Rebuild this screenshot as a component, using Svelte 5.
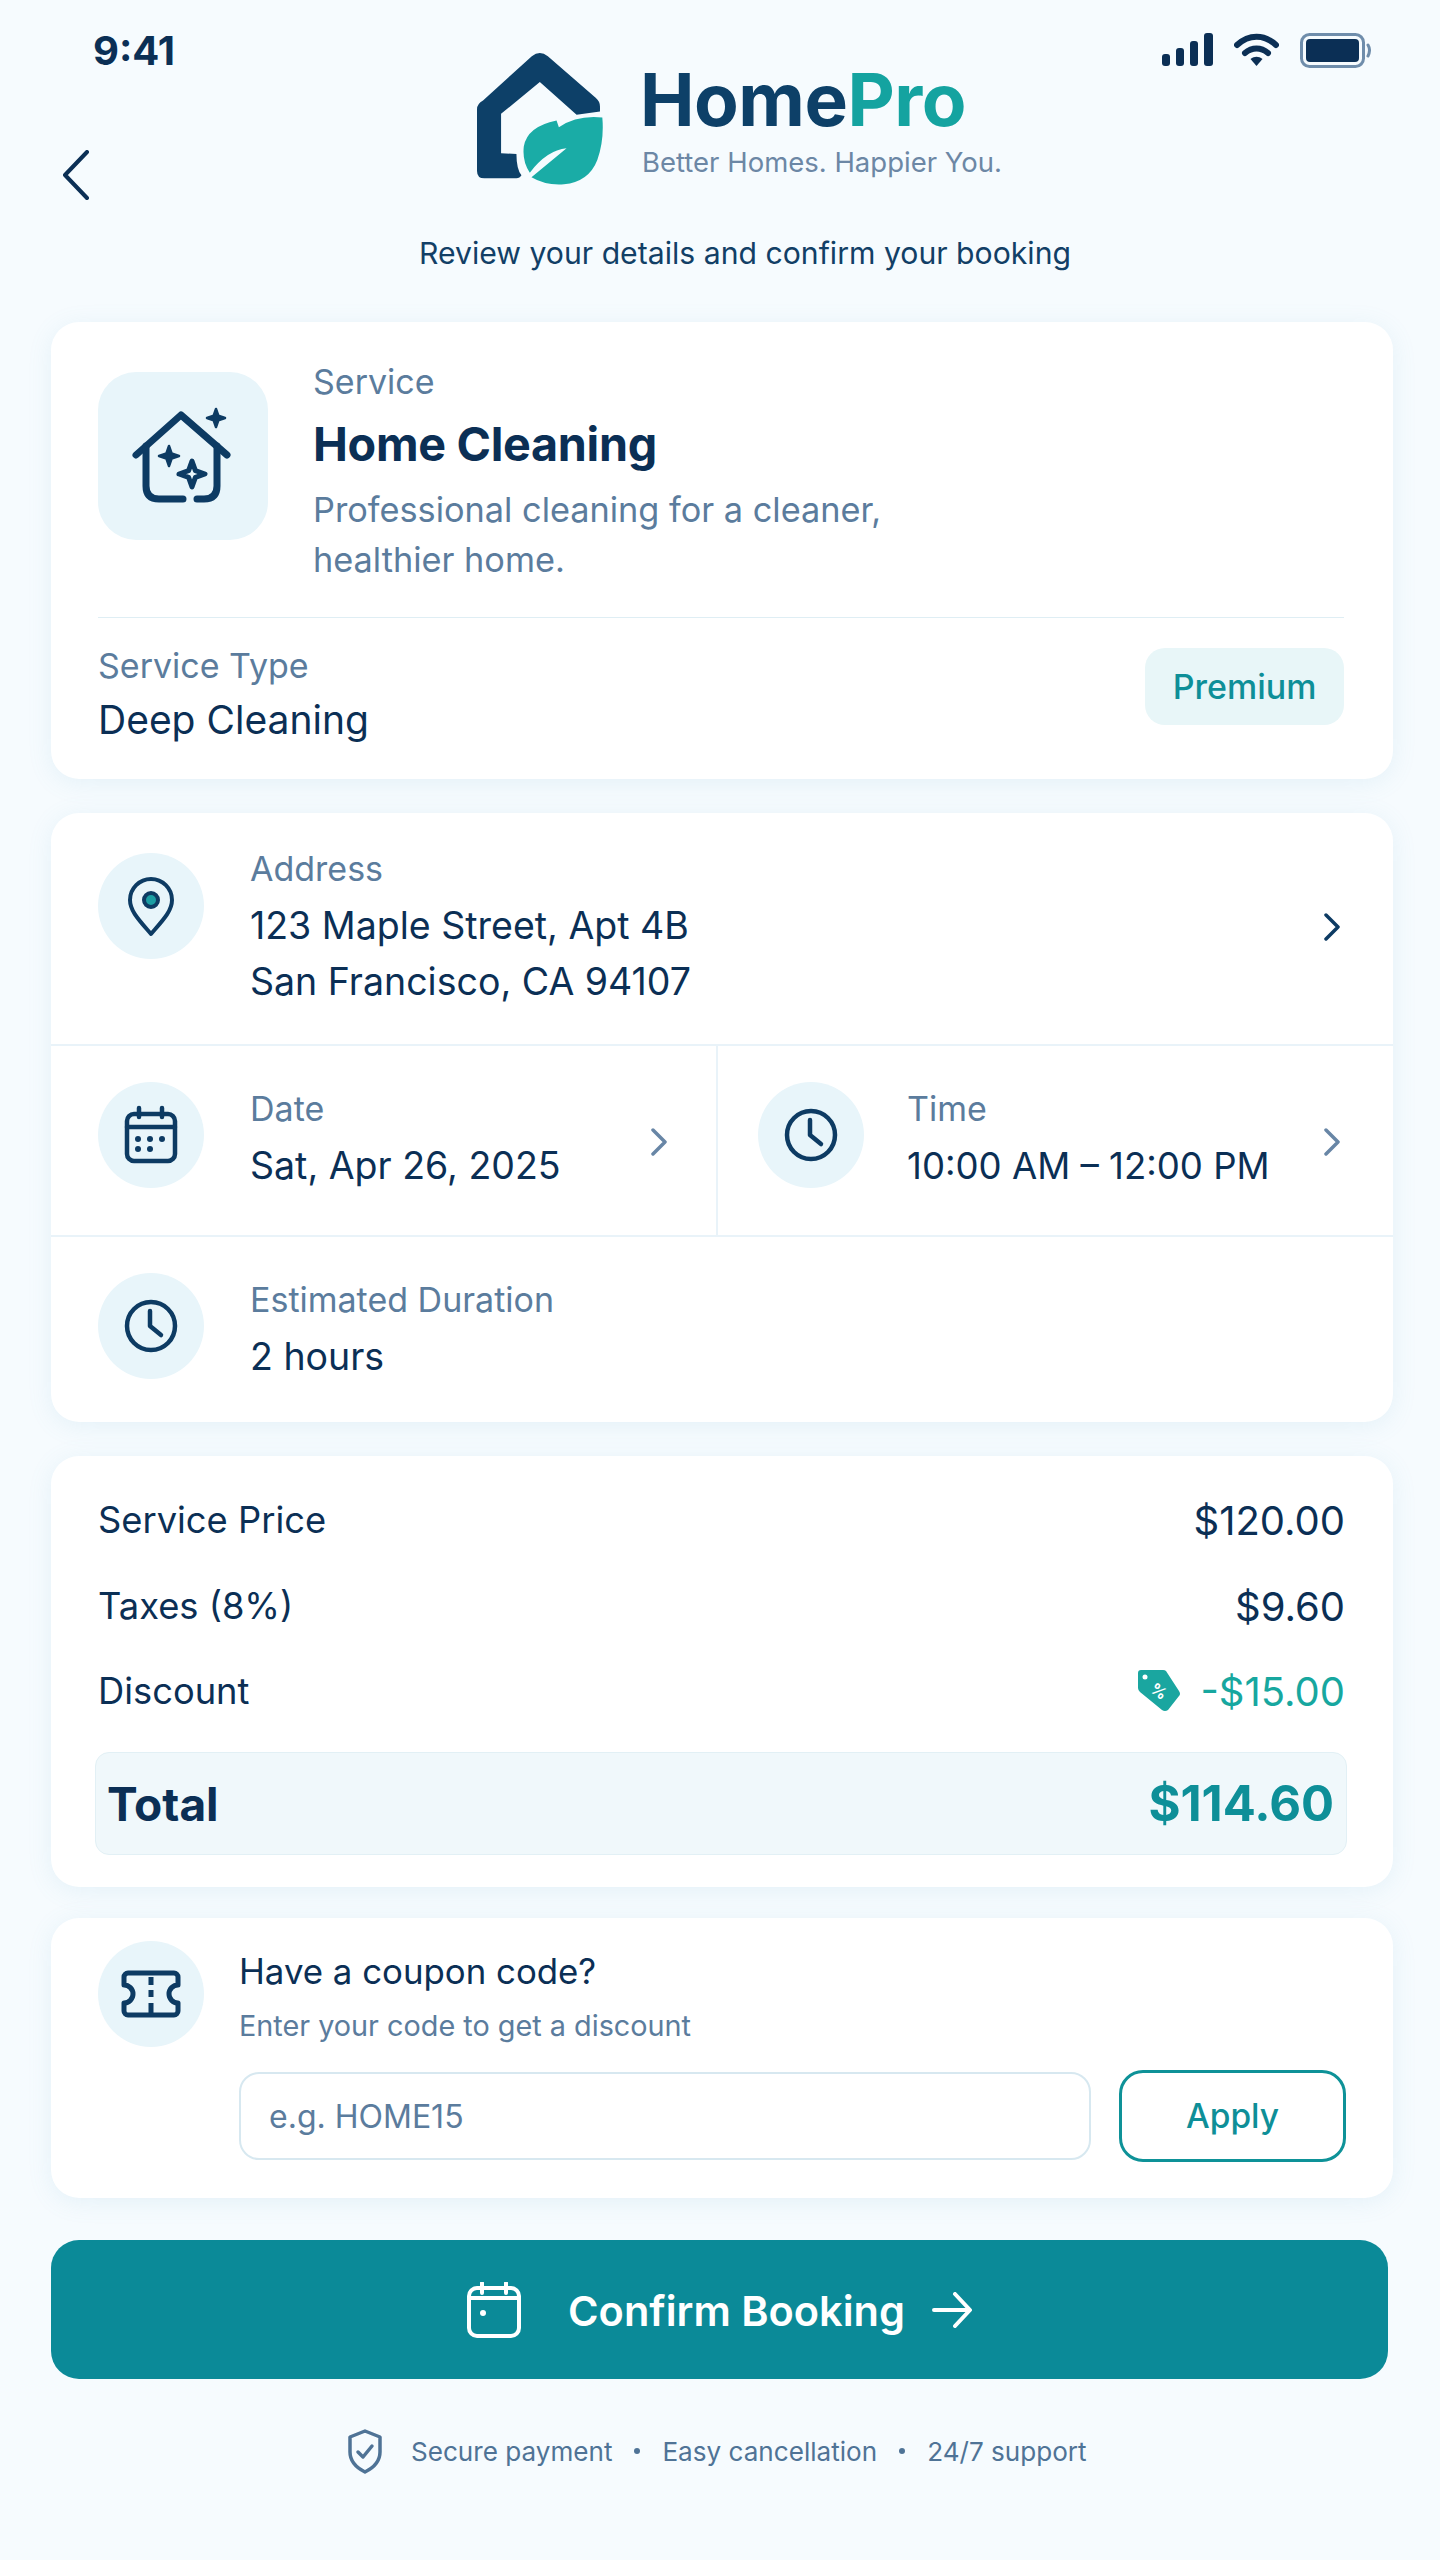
<script>
  const prices = [
    { label: 'Service Price', value: '$120.00' },
    { label: 'Taxes (8%)', value: '$9.60' }
  ];

  // four point star used by the cleaning icon
  function sparkle(cx, cy, r) {
    const k = r * 0.26;
    return `M${cx} ${cy - r}L${cx + k} ${cy - k}L${cx + r} ${cy}L${cx + k} ${cy + k}L${cx} ${cy + r}L${cx - k} ${cy + k}L${cx - r} ${cy}L${cx - k} ${cy - k}Z`;
  }
</script>

<main class="page">
  <header class="top">
    <div class="top-left">
      <div class="time">9:41</div>
      <button class="back" aria-label="Back">
        <svg width="28" height="50" viewBox="0 0 28 50" fill="none" stroke="#0b2f55" stroke-width="4" stroke-linecap="round" stroke-linejoin="round"><path d="M25 2 3 25l22 23"/></svg>
      </button>
    </div>

    <div class="logo">
      <svg width="127" height="132" viewBox="50 40 380 395">
        <path fill="#0d4068" d="M68 182 214 50q24-20 48 0l143 124q13 11 13 26v15l-70 10-110-98-116 95v118l46 2q0 45 15 64-5 9-15 9H72q-22 0-22-22V208q0-16 18-26Z"/>
        <path fill="#1aaca6" d="M425 233q6 68-15 127-25 65-100 73-55 4-97-21l105-87q-58 5-110 73-23-33-18-78 10-60 98-78l7 20q55-37 130-29Z"/>
      </svg>
      <div class="logo-text">
        <div class="brand">Home<span>Pro</span></div>
        <div class="tagline">Better Homes. Happier You.</div>
      </div>
    </div>

    <div class="status">
      <svg width="51" height="33" viewBox="0 0 51 33" fill="#0b2f55">
        <rect x="0" y="21" width="8" height="12" rx="3"/>
        <rect x="14" y="15" width="8" height="18" rx="3"/>
        <rect x="28" y="8" width="8" height="25" rx="3"/>
        <rect x="42" y="0" width="9" height="33" rx="3"/>
      </svg>
      <svg width="45" height="34" viewBox="0 0 45 34" fill="none" stroke="#0b2f55" stroke-width="6" stroke-linecap="round">
        <path d="M3 12C15 1 30 1 42 12"/>
        <path d="M11 20c7-6 16-6 23 0"/>
        <path d="M22.5 33l-6-7c4-3 8-3 12 0Z" fill="#0b2f55" stroke="none"/>
      </svg>
      <svg width="71" height="35" viewBox="0 0 71 35" fill="none">
        <rect x="1.5" y="1.5" width="62" height="32" rx="8" stroke="#6f8dab" stroke-width="3"/>
        <rect x="6" y="6" width="53" height="23" rx="4" fill="#0b2f55"/>
        <path d="M68 12q3 5 0 11" stroke="#6f8dab" stroke-width="3" stroke-linecap="round"/>
      </svg>
    </div>
  </header>

  <p class="subtitle">Review your details and confirm your booking</p>

  <section class="card service-card">
    <div class="service-top">
      <div class="tile">
        <svg width="110" height="105" viewBox="130 405 110 105" fill="none" stroke="#0d3b63" stroke-width="7" stroke-linecap="round" stroke-linejoin="round">
          <path d="M138 456l45-40 46 40"/>
          <path d="M148 447v40q0 13 13 13h24"/>
          <path d="M219 447v40q0 13-13 13h-7"/>
          <path d={sparkle(218, 419, 9)} fill="#0d3b63" stroke-width="2.5"/>
          <path d={sparkle(171, 457, 10)} fill="#0d3b63" stroke-width="2.5"/>
          <path d={sparkle(194, 475, 13)} fill="#eaf6fa" stroke-width="5"/>
        </svg>
      </div>
      <div class="service-text">
        <div class="label">Service</div>
        <h1>Home Cleaning</h1>
        <p>Professional cleaning for a cleaner,<br />healthier home.</p>
      </div>
    </div>
    <div class="service-type">
      <div>
        <div class="label">Service Type</div>
        <div class="value">Deep Cleaning</div>
      </div>
      <span class="pill">Premium</span>
    </div>
  </section>

  <section class="card details">
    <div class="row address">
      <div class="circle">
        <svg width="64" height="64" viewBox="0 0 64 64" fill="none" stroke="#0d3b63" stroke-width="4">
          <path d="M32 60C20 46 11 37 11 26a21 21 0 0 1 42 0C53 37 44 46 32 60Z" stroke-linejoin="round"/>
          <circle cx="32" cy="26" r="7" fill="#1b9ea3"/>
        </svg>
      </div>
      <div class="row-text">
        <div class="label">Address</div>
        <div class="value">123 Maple Street, Apt 4B<br />San Francisco, CA 94107</div>
      </div>
      <svg class="chev dark" width="18" height="28" viewBox="0 0 18 28" fill="none" stroke-width="3.5" stroke-linecap="round" stroke-linejoin="round"><path d="M3 2l12 12L3 26"/></svg>
    </div>

    <div class="split">
      <div class="row date">
        <div class="circle">
          <svg width="64" height="64" viewBox="0 0 64 64" fill="none" stroke="#0d3b63" stroke-width="4.5" stroke-linecap="round">
            <rect x="8" y="11" width="48" height="47" rx="7"/>
            <path d="M20 5v9M43 5v9M8 24h48"/>
            <g fill="#0d3b63" stroke="none">
              <circle cx="19" cy="36" r="3"/><circle cx="31" cy="36" r="3"/><circle cx="43" cy="36" r="3"/>
              <circle cx="19" cy="46" r="3"/><circle cx="31" cy="46" r="3"/>
            </g>
          </svg>
        </div>
        <div class="row-text">
          <div class="label">Date</div>
          <div class="value">Sat, Apr 26, 2025</div>
        </div>
        <svg class="chev" width="18" height="28" viewBox="0 0 18 28" fill="none" stroke-width="3.5" stroke-linecap="round" stroke-linejoin="round"><path d="M3 2l12 12L3 26"/></svg>
      </div>
      <div class="row time-cell">
        <div class="circle">
          <svg width="64" height="64" viewBox="0 0 64 64" fill="none" stroke="#0d3b63" stroke-width="4.5" stroke-linecap="round" stroke-linejoin="round">
            <circle cx="32" cy="32" r="24"/>
            <path d="M31 17v15l11 9"/>
          </svg>
        </div>
        <div class="row-text">
          <div class="label">Time</div>
          <div class="value">10:00 AM – 12:00 PM</div>
        </div>
        <svg class="chev" width="18" height="28" viewBox="0 0 18 28" fill="none" stroke-width="3.5" stroke-linecap="round" stroke-linejoin="round"><path d="M3 2l12 12L3 26"/></svg>
      </div>
    </div>

    <div class="row duration">
      <div class="circle">
        <svg width="64" height="64" viewBox="0 0 64 64" fill="none" stroke="#0d3b63" stroke-width="4.5" stroke-linecap="round" stroke-linejoin="round">
          <circle cx="32" cy="32" r="24"/>
          <path d="M31 17v15l11 9"/>
        </svg>
      </div>
      <div class="row-text">
        <div class="label">Estimated Duration</div>
        <div class="value">2 hours</div>
      </div>
    </div>
  </section>

  <section class="card pricing">
    {#each prices as p}
      <div class="price-row">
        <span>{p.label}</span>
        <span class="amount">{p.value}</span>
      </div>
    {/each}
    <div class="price-row last">
      <span>Discount</span>
      <span class="amount discount">
        <svg width="42" height="42" viewBox="0 0 42 42">
          <path fill="#1aa6a0" d="M3 0h22q2 0 3 1l13 20q2 3 0 5L30 40q-3 2-6 0L2 22q-2-2-2-4V3q0-3 3-3Z"/>
          <circle cx="7" cy="7" r="2.5" fill="#fff"/>
          <text x="21" y="27" text-anchor="middle" fill="#fff" font-size="16" font-weight="700" transform="rotate(35 21 21)">%</text>
        </svg>
        -$15.00
      </span>
    </div>
    <div class="total">
      <span>Total</span>
      <span class="total-value">$114.60</span>
    </div>
  </section>

  <section class="card coupon">
    <div class="coupon-head">
      <div class="circle">
        <svg width="64" height="64" viewBox="0 0 64 64" fill="none" stroke="#0d3b63" stroke-width="5" stroke-linejoin="round">
          <path d="M9 11h46a4 4 0 0 1 4 4v8a9 9 0 0 0 0 18v8a4 4 0 0 1-4 4H9a4 4 0 0 1-4-4v-8a9 9 0 0 0 0-18v-8a4 4 0 0 1 4-4Z"/>
          <path d="M32 15v8M32 28v7M32 41v10"/>
        </svg>
      </div>
      <div>
        <div class="coupon-title">Have a coupon code?</div>
        <div class="coupon-sub">Enter your code to get a discount</div>
      </div>
    </div>
    <div class="coupon-form">
      <input type="text" placeholder="e.g. HOME15" aria-label="Coupon code" />
      <button class="apply">Apply</button>
    </div>
  </section>

  <button class="confirm">
    <svg width="54" height="56" viewBox="0 0 54 56" fill="none" stroke="#fff" stroke-width="4" stroke-linecap="round" stroke-linejoin="round">
      <rect x="2" y="6" width="50" height="48" rx="8"/>
      <path d="M15 1v10M39 1v10M2 16h50"/>
      <circle cx="16" cy="31" r="3" fill="#fff" stroke="none"/>
    </svg>
    <span>Confirm Booking</span>
    <svg class="arrow" width="40" height="36" viewBox="0 0 40 36" fill="none" stroke="#fff" stroke-width="4" stroke-linecap="round" stroke-linejoin="round"><path d="M2 18h35M23 2l15 16-15 16"/></svg>
  </button>

  <footer class="foot">
    <svg width="36" height="45" viewBox="0 0 36 45" fill="none" stroke="#4f7396" stroke-width="3.5" stroke-linecap="round" stroke-linejoin="round">
      <path d="M18 2 33 8v15c0 10-7 16-15 20C10 39 3 33 3 23V8Z"/>
      <path d="M11 23l5 5 9-11"/>
    </svg>
    <span class="f1">Secure payment</span>
    <i></i>
    <span>Easy cancellation</span>
    <i></i>
    <span>24/7 support</span>
  </footer>
</main>

<style>
  :global(body) {
    margin: 0;
    background: #f6fbfe;
  }

  .page {
    width: 1342px;
    height: 2560px;
    padding-left: 51px;
    font-family: Inter, 'Liberation Sans', sans-serif;
    color: #0b2f55;
  }

  button {
    font-family: inherit;
    background: none;
    border: none;
    padding: 0;
    cursor: pointer;
  }

  .top {
    display: grid;
    grid-template-columns: 426px auto 1fr;
    height: 231px;
  }

  .top-left {
    padding-top: 31px;
  }

  .time {
    padding-left: 42px;
    font-size: 40px;
    font-weight: 700;
    line-height: 40px;
  }

  .back {
    display: block;
    margin: 79px 0 0 11px;
  }

  .logo {
    display: flex;
    gap: 38px;
    padding-top: 53px;
  }

  .logo-text {
    padding-top: 7px;
  }

  .brand {
    font-size: 73px;
    font-weight: 700;
    line-height: 80px;
    color: #0d4068;
    letter-spacing: -0.5px;
    margin-left: -2px;
  }

  .brand span {
    color: #14a3a0;
  }

  .tagline {
    margin-top: 2px;
    font-size: 27.5px;
    line-height: 40px;
    color: #6c87a5;
  }

  .status {
    display: flex;
    justify-content: flex-end;
    gap: 21px;
    padding: 33px 22px 0 0;
    align-items: flex-start;
  }

  .subtitle {
    margin: 0 0 47px 46px;
    font-size: 30.2px;
    line-height: 44px;
    text-align: center;
    color: #123f66;
  }

  .card {
    background: #fff;
    border-radius: 28px;
    box-shadow: 0 4px 24px rgba(110, 170, 205, 0.12);
    margin-bottom: 34px;
  }

  .label {
    font-size: 34px;
    line-height: 44px;
    color: #5b7c9d;
  }

  .value {
    font-size: 37.5px;
    line-height: 56px;
    color: #0b2f55;
  }

  /* service card */
  .service-card {
    height: 457px;
    box-sizing: border-box;
    padding: 38px 49px 0 47px;
  }

  .service-top {
    display: flex;
    gap: 45px;
    padding-bottom: 32px;
    border-bottom: 1px solid #dfeef4;
  }

  .tile {
    width: 170px;
    height: 168px;
    margin-top: 12px;
    border-radius: 38px;
    background: #e8f5fa;
    display: flex;
    align-items: center;
    justify-content: center;
  }

  .service-text h1 {
    margin: 10px 0 0;
    font-size: 46.7px;
    font-weight: 700;
    line-height: 60px;
    letter-spacing: -0.3px;
    color: #0b2f55;
  }

  .service-text p {
    margin: 11px 0 0;
    font-size: 34.3px;
    line-height: 50px;
    color: #5b7c9d;
  }

  .service-type {
    display: flex;
    justify-content: space-between;
    align-items: flex-start;
    padding-top: 26px;
  }

  .service-type .value {
    font-size: 39px;
    line-height: 50px;
    margin-top: 7px;
  }

  .pill {
    margin-top: 4px;
    width: 199px;
    height: 77px;
    border-radius: 20px;
    background: #e8f6f8;
    color: #0e8f98;
    font-size: 34px;
    font-weight: 500;
    display: flex;
    align-items: center;
    justify-content: center;
  }

  /* details card */
  .details {
    height: 609px;
    overflow: hidden;
  }

  .row {
    display: flex;
    align-items: flex-start;
    gap: 46px;
    padding: 41px 0 42px 47px;
  }

  .circle {
    flex: none;
    width: 106px;
    height: 106px;
    margin-top: -5px;
    border-radius: 50%;
    background: #e8f5fa;
    display: flex;
    align-items: center;
    justify-content: center;
  }

  .row-text {
    flex: 1;
    min-width: 0;
    white-space: nowrap;
  }

  .label + .value {
    margin-top: 7px;
  }

  .chev {
    flex: none;
    stroke: #6886a6;
    margin-top: 41px;
  }

  .chev.dark {
    stroke: #0d3b63;
  }

  .address {
    height: 233px;
    box-sizing: border-box;
    padding: 34px 52px 0 47px;
    border-bottom: 2px solid #e9f3f9;
  }

  .address .circle {
    margin-top: 6px;
  }

  .address .chev {
    margin-top: 66px;
  }

  .split {
    display: grid;
    grid-template-columns: 667px 1fr;
    border-bottom: 2px solid #e9f3f9;
  }

  .split .row {
    padding-bottom: 41px;
  }

  .date {
    padding-right: 48px;
    border-right: 2px solid #e9f3f9;
  }

  .time-cell {
    padding-left: 40px;
    padding-right: 52px;
    gap: 43px;
  }

  .time-cell .value {
    font-size: 36.6px;
  }

  /* pricing card */
  .pricing {
    height: 431px;
    box-sizing: border-box;
    padding: 39px 48px 0 47px;
    margin-bottom: 31px;
  }

  .price-row {
    display: flex;
    justify-content: space-between;
    align-items: center;
    height: 50px;
    margin-bottom: 36px;
    font-size: 36.3px;
  }

  .price-row.last {
    margin-top: -1px;
    margin-bottom: 37px;
  }

  .amount {
    font-size: 40px;
  }

  .discount {
    display: flex;
    align-items: center;
    gap: 20px;
    color: #17a79f;
  }

  .total {
    display: flex;
    justify-content: space-between;
    align-items: center;
    margin: -1px -2px 0 -3px;
    height: 103px;
    box-sizing: border-box;
    padding: 0 12px 0 11px;
    background: #f0f8fb;
    border: 1px solid #e2f0f5;
    border-radius: 14px;
    font-size: 46px;
    font-weight: 700;
  }

  .total-value {
    font-size: 49px;
    color: #0e8f98;
  }

  /* coupon card */
  .coupon {
    height: 280px;
    box-sizing: border-box;
    padding: 23px 47px 0;
    margin-bottom: 42px;
  }

  .coupon-head {
    display: flex;
    gap: 35px;
    height: 106px;
  }

  .coupon-head .circle {
    margin-top: 0;
  }

  .coupon-title {
    margin-top: 5px;
    font-size: 34.8px;
    line-height: 50px;
  }

  .coupon-sub {
    margin-top: 8px;
    font-size: 28.8px;
    line-height: 44px;
    color: #5b7c9d;
  }

  .coupon-form {
    display: flex;
    align-items: center;
    gap: 28px;
    margin: 23px 0 0 141px;
  }

  .coupon-form input {
    flex: 1;
    min-width: 0;
    height: 88px;
    box-sizing: border-box;
    padding: 0 28px;
    border: 2px solid #d7e8f0;
    border-radius: 20px;
    background: #fff;
    font-family: inherit;
    font-size: 32px;
    color: #0b2f55;
  }

  .coupon-form input::placeholder {
    color: #5b7c9d;
    opacity: 1;
  }

  .apply {
    flex: none;
    width: 227px;
    height: 92px;
    box-sizing: border-box;
    border: 3px solid #0e9298;
    border-radius: 24px;
    color: #0e8f98;
    font-size: 33.5px;
    font-weight: 500;
  }

  /* confirm */
  .confirm {
    width: 1337px;
    height: 139px;
    border-radius: 28px;
    background: #0b8a98;
    color: #fff;
    font-size: 41.5px;
    font-weight: 600;
    display: flex;
    align-items: center;
    justify-content: center;
    gap: 47px;
  }

  .confirm span {
    padding-top: 2px;
  }

  .arrow {
    margin-left: -20px;
  }

  .foot {
    display: flex;
    align-items: center;
    margin-top: 50px;
    padding-left: 296px;
    height: 44px;
    gap: 22px;
    font-size: 26.1px;
    color: #4f7396;
  }

  .foot .f1 {
    margin-left: 6px;
  }

  .foot i {
    width: 6px;
    height: 6px;
    border-radius: 50%;
    background: #4f7396;
  }
</style>
